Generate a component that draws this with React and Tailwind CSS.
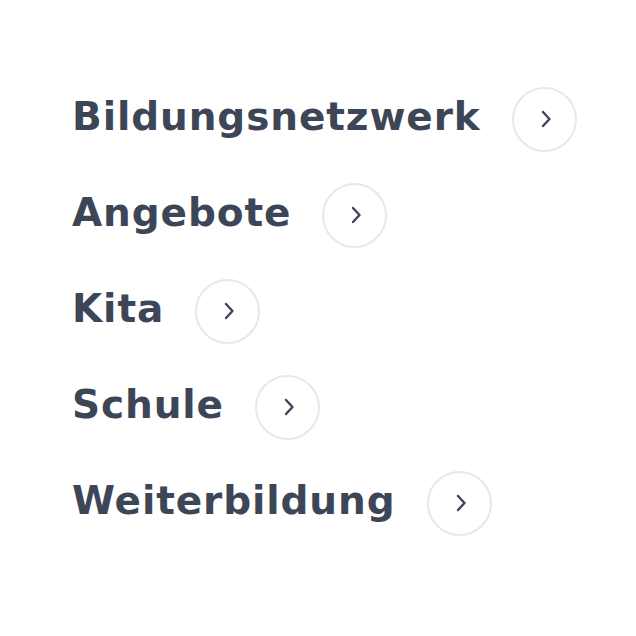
const items = ["Bildungsnetzwerk", "Angebote", "Kita", "Schule", "Weiterbildung"];

function Chevron() {
  return (
    <svg width="16" height="22" viewBox="0 0 16 22" fill="none" className="ml-[3px]">
      <path d="M5 4l6.5 7L5 18" stroke="#3d4656" strokeWidth="2.4" strokeLinecap="round" strokeLinejoin="round" />
    </svg>
  );
}

export default function App() {
  return (
    <div className="w-[636px] h-[636px] bg-white pl-[72px] pt-[87px]" style={{ fontFamily: '"DejaVu Sans", Verdana, sans-serif' }}>
      <ul className="flex flex-col gap-[32px]">
        {items.map((label) => (
          <li key={label} className="flex items-center gap-[31px] h-[64px]">
            <span className="text-[39px] font-bold text-[#3d4656] leading-none tracking-[0.9px] pb-[5px]">{label}</span>
            <span className="w-[65px] h-[65px] rounded-full border-2 border-[#e8e8e8] flex items-center justify-center">
              <Chevron />
            </span>
          </li>
        ))}
      </ul>
    </div>
  );
}
